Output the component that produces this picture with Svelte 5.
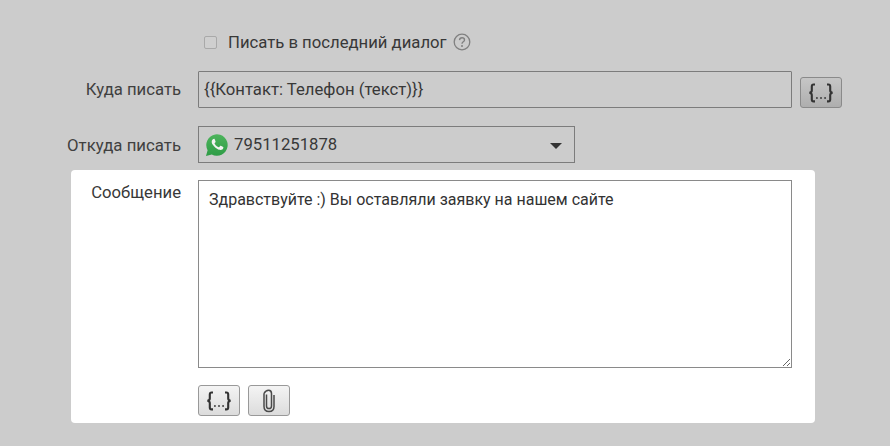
<script>
  let message = $state('Здравствуйте :) Вы оставляли заявку на нашем сайте');
  let phone = $state('{{Контакт: Телефон (текст)}}');
</script>

{#snippet vars()}
  <svg width="28" height="24" viewBox="0 0 28 24" fill="none" stroke="#333" stroke-width="2.100">
    <path d="M8 3.500H6.600C5.200 3.500 4.800 4.300 4.800 5.400V9.500c0 1.300-.8 2-2.300 2.300 1.500.3 2.300 1 2.300 2.300v4.300c0 1.100.4 2 1.800 2H8"/>
    <path d="M20 3.500h1.400c1.400 0 1.800.8 1.800 1.900V9.500c0 1.300.8 2 2.300 2.300-1.500.3-2.300 1-2.300 2.300v4.300c0 1.100-.4 2-1.800 2H20"/>
    <path d="M9 17h1.800M13.100 17h1.800M17.200 17H19" stroke-width="1.700"/>
  </svg>
{/snippet}

<div class="page">
  <div class="row check-row">
    <span class="label"></span>
    <span class="box"></span>
    <span class="check-text">Писать в последний диалог</span>
    <svg class="help" width="18" height="18" viewBox="0 0 18 18" fill="none">
      <circle cx="9" cy="9" r="7.800" stroke="#808080" stroke-width="1.300"/>
      <path d="M6.500 7.100C6.600 5.600 7.600 4.800 9 4.800c1.500 0 2.500.9 2.500 2.100 0 1.900-2.500 1.900-2.500 3.800" stroke="#808080" stroke-width="1.400"/>
      <circle cx="9" cy="13" r="1" fill="#808080"/>
    </svg>
  </div>

  <div class="row to-row">
    <span class="label">Куда писать</span>
    <input class="field phone" bind:value={phone} />
    <button class="btn dim">{@render vars()}</button>
  </div>

  <div class="row from-row">
    <span class="label from-label">Откуда писать</span>
    <div class="field select">
      <svg width="24" height="24" viewBox="0 0 24 24">
        <defs>
          <linearGradient id="wa" x1="0" y1="0" x2="0" y2="1">
            <stop offset="0" stop-color="#4db45c"/>
            <stop offset="1" stop-color="#2e9c46"/>
          </linearGradient>
        </defs>
        <path d="M1 23l1.600-5.800A10.700 10.700 0 1 1 6.800 21.400L1 23z" fill="url(#wa)"/>
        <path d="M8.600 6.400c-.3 0-.7.1-1 .5-.4.4-1.200 1.200-1.200 2.800s1.200 3.200 1.400 3.400c.2.200 2.300 3.700 5.700 5 2.800 1.100 3.400.9 4 .8.600-.1 2-.8 2.200-1.600.3-.8.300-1.400.2-1.600-.1-.1-.3-.2-.6-.4l-2.300-1.100c-.3-.1-.5-.2-.8.200l-1 1.300c-.2.200-.4.300-.8.100-.3-.2-1.400-.5-2.700-1.700-1-.9-1.700-2-1.900-2.300-.2-.4 0-.6.100-.8l.6-.7c.2-.2.200-.4.400-.6.100-.2 0-.5 0-.6l-1-2.500c-.3-.6-.5-.6-.8-.6z" fill="#f3f3f3" transform="translate(1.200 .6) scale(.86)"/>
      </svg>
      <span class="num">79511251878</span>
      <span class="caret"></span>
    </div>
  </div>

  <div class="panel">
    <div class="row msg-row">
      <span class="label msg-label">Сообщение</span>
      <div class="msg-body">
        <textarea class="msg" bind:value={message}></textarea>
        <div class="tools">
          <button class="btn">{@render vars()}</button>
          <button class="btn">
            <svg width="16" height="26" viewBox="0 0 16 26" fill="none" stroke="#4a4a4a" stroke-width="1.500">
              <path d="M5.500 6.500V18c0 1.600 1 2.600 2.500 2.600s2.500-1 2.500-2.600V5.500C10.500 3.500 9.400 2.200 7.600 2.200S4 3.500 3 5.500M3 5.500V18.500c0 3 2 5 5 5s5-2 5-5V7"/>
            </svg>
          </button>
        </div>
      </div>
    </div>
  </div>
</div>

<style>
  :global(body) {
    margin: 0;
    background: #ccc;
  }
  .page {
    width: 890px;
    height: 446px;
    box-sizing: border-box;
    background: #ccc;
    font-family: Roboto, "Liberation Sans", sans-serif;
    font-size: 16.700px;
    color: #3a3a3a;
    overflow: hidden;
  }
  .row {
    display: flex;
    align-items: center;
  }
  .label {
    width: 181px;
    margin-right: 17px;
    text-align: right;
    flex: none;
    color: #404040;
  }
  .from-label {
    font-size: 16.800px;
  }
  .check-row {
    height: 22px;
    margin-top: 31px;
  }
  .box {
    width: 11px;
    height: 11px;
    margin-left: 6px;
    border: 1px solid #a9a9a9;
    border-radius: 2px;
    background: #cfcfcf;
  }
  .check-text {
    margin-left: 11px;
    color: #383838;
  }
  .help {
    margin-left: 6px;
  }
  .to-row {
    margin-top: 18px;
    align-items: flex-start;
    height: 37px;
  }
  .to-row .label {
    line-height: 37px;
  }
  .field {
    box-sizing: border-box;
    border: 1px solid #7c7c7c;
    background: #ccc;
    font: inherit;
    color: #383838;
  }
  .phone {
    width: 594px;
    height: 37px;
    padding: 0 5px;
    border-radius: 1px;
    outline: none;
  }
  .btn {
    box-sizing: border-box;
    width: 42px;
    height: 31px;
    padding: 0;
    border: 1px solid #999;
    border-radius: 3px;
    background: linear-gradient(#f4f4f4, #dcdcdc);
    display: flex;
    align-items: center;
    justify-content: center;
  }
  .btn.dim {
    margin: 6px 0 0 8px;
    background: linear-gradient(#c6c6c6, #aeaeae);
    border-color: #8a8a8a;
  }
  .from-row {
    margin-top: 18px;
    height: 37px;
  }
  .select {
    width: 377px;
    height: 37px;
    padding-left: 6px;
    display: flex;
    align-items: center;
    position: relative;
  }
  .num {
    margin-left: 5px;
  }
  .caret {
    position: absolute;
    right: 12px;
    top: 16px;
    border-left: 6px solid transparent;
    border-right: 6px solid transparent;
    border-top: 6px solid #333;
  }
  .panel {
    box-sizing: border-box;
    width: 744px;
    height: 253px;
    margin: 7px 0 0 71px;
    padding-top: 10px;
    background: #fff;
    border-radius: 4px;
  }
  .msg-row {
    align-items: flex-start;
  }
  .msg-label {
    width: 110px;
    padding-top: 3px;
    color: #383838;
  }
  .msg {
    display: block;
    box-sizing: border-box;
    width: 594px;
    height: 188px;
    padding: 9px 10px;
    border: 1px solid #8a8a8a;
    border-radius: 0;
    font: inherit;
    font-size: 16px;
    color: #333;
    outline: none;
    background: #fff;
  }
  .tools {
    display: flex;
    gap: 8px;
    margin-top: 17px;
  }
</style>
